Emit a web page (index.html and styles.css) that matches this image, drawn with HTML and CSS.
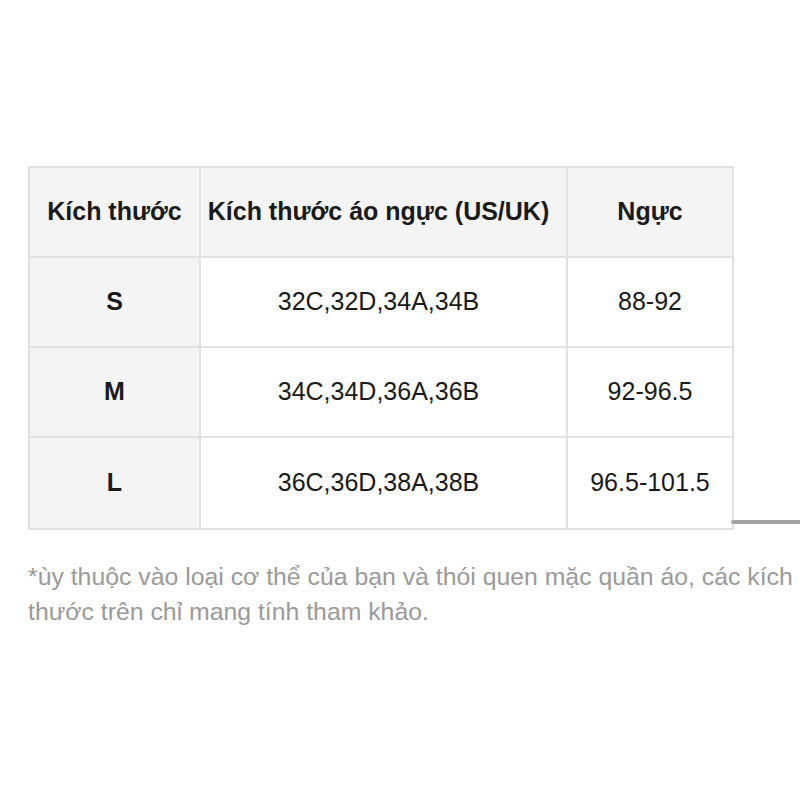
FILE: index.html
```html
<!DOCTYPE html>
<html lang="vi">
<head>
<meta charset="utf-8">
<link rel="stylesheet" href="styles.css">
</head>
<body>
<div class="page">
  <table class="size-table">
    <colgroup>
      <col class="c1"><col class="c2"><col class="c3">
    </colgroup>
    <thead>
      <tr class="r-head">
        <th>Kích thước</th>
        <th class="mid">Kích thước áo ngực (US/UK)</th>
        <th>Ngực</th>
      </tr>
    </thead>
    <tbody>
      <tr class="r-body">
        <th>S</th>
        <td class="mid">32C,32D,34A,34B</td>
        <td>88-92</td>
      </tr>
      <tr class="r-body">
        <th>M</th>
        <td class="mid">34C,34D,36A,36B</td>
        <td>92-96.5</td>
      </tr>
      <tr class="r-last">
        <th>L</th>
        <td class="mid">36C,36D,38A,38B</td>
        <td>96.5-101.5</td>
      </tr>
    </tbody>
  </table>
  <p class="note">*ùy thuộc vào loại cơ thể của bạn và thói quen mặc quần áo, các kích thước trên chỉ mang tính tham khảo.</p>
  <div class="scrollbar"></div>
</div>
</body>
</html>
```
FILE: styles.css
```css
html, body {
  margin: 0;
  padding: 0;
  background: #ffffff;
}
.page {
  position: relative;
  width: 800px;
  height: 800px;
  padding: 166px 0 0 28px;
  box-sizing: border-box;
  font-family: "Liberation Sans", Arial, sans-serif;
  overflow: hidden;
}
.size-table {
  border-collapse: collapse;
  table-layout: fixed;
  width: 704px;
}
.c1 { width: 171px; }
.c2 { width: 367px; }
.c3 { width: 166px; }
.size-table th,
.size-table td {
  border: 2px solid #e2e2e2;
  text-align: center;
  vertical-align: middle;
  padding: 0 0 2px 0;
  font-size: 25px;
  color: #1a1a1a;
}
.size-table .mid {
  padding-right: 10px;
}
.size-table th {
  background: #f4f4f4;
  font-weight: bold;
}
.size-table td {
  background: #ffffff;
  font-weight: normal;
}
.r-head { height: 90px; }
.r-body { height: 90px; }
.r-last { height: 92px; }
.note {
  margin: 29px 0 0 0;
  width: 772px;
  font-size: 24.8px;
  line-height: 35px;
  color: #9a9a9a;
}
.scrollbar {
  position: absolute;
  left: 731px;
  top: 520px;
  width: 75px;
  height: 4px;
  border-radius: 2px;
  background: #a2a2a2;
}
```
